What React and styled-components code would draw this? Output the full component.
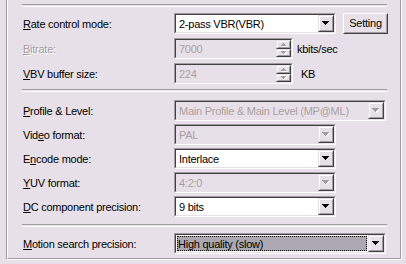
import styled, { createGlobalStyle } from "styled-components";

const FACE = "#e8e0e8";
const SHADOW = "#a09ca0";
const DARK = "#404040";

const GlobalStyle = createGlobalStyle`
    body {
        margin: 0;
        background: ${FACE};
        font-family: "Liberation Sans", Arial, sans-serif;
        font-size: 11px;
        letter-spacing: -0.25px;
        color: #000;
    }
`;

const Frame = styled.div`
    margin-left: 6px;
    width: 396px;
    height: 260px;
    box-sizing: border-box;
    border-left: 1px solid ${SHADOW};
    border-right: 1px solid #fff;
    border-bottom: 1px solid #fff;
`;

const FrameInner = styled.div`
    height: 100%;
    box-sizing: border-box;
    border-left: 1px solid #fff;
    border-right: 1px solid ${SHADOW};
    border-bottom: 1px solid ${SHADOW};
    padding-top: 4px;
    display: flex;
    flex-direction: column;
`;

const Separator = styled.div`
    margin-left: 14px;
    margin-top: ${props => props.top || 0}px;
    width: 365px;
    height: 1px;
    border-top: 1px solid ${SHADOW};
    border-bottom: 1px solid #fff;
`;

const Group = styled.div`
    display: flex;
    flex-direction: column;
    gap: ${props => props.gap}px;
    margin-top: ${props => props.top}px;
    padding-left: 15px;
`;

const Row = styled.div`
    display: flex;
    align-items: center;
    height: 21px;
`;

const Label = styled.div`
    width: 151px;
    flex-shrink: 0;
    white-space: nowrap;
    ${props => props.disabled ? `
        color: #a39ba3;
        text-shadow: 1px 1px 0 #fff;
    ` : ``}
`;

const Sunken = styled.div`
    width: ${props => props.width}px;
    height: 21px;
    box-sizing: border-box;
    border: 1px solid;
    border-color: ${SHADOW} #fff #fff ${SHADOW};
    flex-shrink: 0;
`;

const SunkenInner = styled.div`
    height: 100%;
    box-sizing: border-box;
    border: 1px solid;
    border-color: ${DARK} ${FACE} ${FACE} ${DARK};
    background: ${props => props.disabled ? FACE : "#fff"};
    display: flex;
    align-items: stretch;
`;

const FieldText = styled.div`
    flex: 1;
    display: flex;
    align-items: center;
    padding-left: 3px;
    white-space: nowrap;
    overflow: hidden;
    color: ${props => props.disabled ? "#a8a0a0" : "#000"};
`;

const Highlight = styled.div`
    flex: 1;
    display: flex;
    align-items: center;
    margin: 1px 1px 1px 1px;
    padding-left: 1px;
    background: #aba8b2;
    outline: 1px dotted #000;
    outline-offset: -1px;
    white-space: nowrap;
`;

const Raised = styled.div`
    box-sizing: border-box;
    border: 1px solid;
    border-color: ${FACE} ${DARK} ${DARK} ${FACE};
    background: ${FACE};
    width: ${props => props.width}px;
    height: ${props => props.height}px;
    flex-shrink: 0;
`;

const RaisedInner = styled.div`
    height: 100%;
    box-sizing: border-box;
    border: 1px solid;
    border-color: #fff ${SHADOW} ${SHADOW} #fff;
    display: flex;
    align-items: center;
    justify-content: center;
`;

const Spinner = styled.div`
    display: flex;
    flex-direction: column;
    width: 15px;
    flex-shrink: 0;
`;

const Button = styled.div`
    margin-left: 7px;
    width: 45px;
    height: 21px;
    box-sizing: border-box;
    border: 1px solid;
    border-color: #fff ${DARK} ${DARK} #fff;
`;

const ButtonInner = styled.div`
    height: 100%;
    box-sizing: border-box;
    border: 1px solid;
    border-color: ${FACE} ${SHADOW} ${SHADOW} ${FACE};
    display: flex;
    align-items: center;
    justify-content: center;
    padding-bottom: 1px;
`;

const Unit = styled.div`
    margin-left: ${props => props.gap}px;
    white-space: nowrap;
`;

function Arrow({ disabled, up, size = 7 }) {
    const rows = [];
    const n = Math.ceil(size / 2);
    for (let i = 0; i < n; i++) {
        const y = up ? n - 1 - i : i;
        rows.push({ x: i, y, w: size - 2 * i });
    }
    const fill = disabled ? SHADOW : "#000";
    return (
        <svg width={size + 1} height={n + 1} style={{ display: "block" }}>
            {disabled && rows.map((r, i) => (
                <rect key={"s" + i} x={r.x + 1} y={r.y + 1} width={r.w} height={1} fill="#fff" />
            ))}
            {rows.map((r, i) => (
                <rect key={i} x={r.x} y={r.y} width={r.w} height={1} fill={fill} />
            ))}
        </svg>
    );
}

function Combo({ width, value, disabled, focused }) {
    return (
        <Sunken width={width}>
            <SunkenInner disabled={disabled}>
                {focused
                    ? <Highlight>{value}</Highlight>
                    : <FieldText disabled={disabled}>{value}</FieldText>}
                <Raised width={16} height={17}>
                    <RaisedInner>
                        <Arrow disabled={disabled} />
                    </RaisedInner>
                </Raised>
            </SunkenInner>
        </Sunken>
    );
}

function SpinEdit({ width, value }) {
    return (
        <Sunken width={width}>
            <SunkenInner disabled>
                <FieldText disabled>{value}</FieldText>
                <Spinner>
                    <Raised width={15} height={9}>
                        <RaisedInner>
                            <Arrow up disabled size={5} />
                        </RaisedInner>
                    </Raised>
                    <Raised width={15} height={8}>
                        <RaisedInner>
                            <Arrow disabled size={5} />
                        </RaisedInner>
                    </Raised>
                </Spinner>
            </SunkenInner>
        </Sunken>
    );
}

export default function App() {
    return (
        <>
            <GlobalStyle />
            <Frame>
                <FrameInner>
                    <Separator />
                    <Group top={6} gap={4}>
                        <Row>
                            <Label><u>R</u>ate control mode:</Label>
                            <Combo width={162} value="2-pass VBR(VBR)" />
                            <Button>
                                <ButtonInner>Setting</ButtonInner>
                            </Button>
                        </Row>
                        <Row>
                            <Label disabled><u>B</u>itrate:</Label>
                            <SpinEdit width={119} value="7000" />
                            <Unit gap={4}>kbits/sec</Unit>
                        </Row>
                        <Row>
                            <Label><u>V</u>BV buffer size:</Label>
                            <SpinEdit width={119} value="224" />
                            <Unit gap={8}>KB</Unit>
                        </Row>
                    </Group>
                    <Separator top={5} />
                    <Group top={8} gap={3}>
                        <Row>
                            <Label><u>P</u>rofile &amp; Level:</Label>
                            <Combo width={212} value="Main Profile & Main Level (MP@ML)" disabled />
                        </Row>
                        <Row>
                            <Label>Vid<u>e</u>o format:</Label>
                            <Combo width={162} value="PAL" disabled />
                        </Row>
                        <Row>
                            <Label>E<u>n</u>code mode:</Label>
                            <Combo width={162} value="Interlace" />
                        </Row>
                        <Row>
                            <Label><u>Y</u>UV format:</Label>
                            <Combo width={162} value="4:2:0" disabled />
                        </Row>
                        <Row>
                            <Label><u>D</u>C component precision:</Label>
                            <Combo width={162} value="9 bits" />
                        </Row>
                    </Group>
                    <Separator top={7} />
                    <Group top={6} gap={0}>
                        <Row>
                            <Label><u>M</u>otion search precision:</Label>
                            <Combo width={212} value="High quality (slow)" focused />
                        </Row>
                    </Group>
                </FrameInner>
            </Frame>
        </>
    );
}
